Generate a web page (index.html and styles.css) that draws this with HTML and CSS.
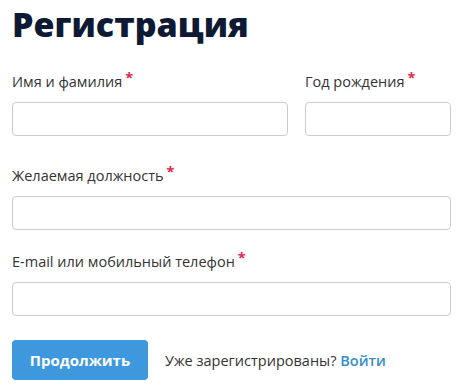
FILE: index.html
```
<!DOCTYPE html>
<html lang="ru">
<head>
  <meta charset="UTF-8">
  <meta name="viewport" content="width=device-width, initial-scale=1.0">
  <title>Регистрация</title>
  <link rel="stylesheet" href="styles.css">
</head>
<body>

<div class="container">
  <h1>Регистрация</h1>

  <form class="reg-form">
    <div class="row row-split">
      <div class="field">
        <label>Имя и фамилия<span class="req">*</span></label>
        <input type="text">
      </div>
      <div class="field">
        <label>Год рождения<span class="req">*</span></label>
        <input type="text">
      </div>
    </div>

    <div class="row">
      <div class="field">
        <label>Желаемая должность<span class="req">*</span></label>
        <input type="text">
      </div>
    </div>

    <div class="row">
      <div class="field">
        <label>E-mail или мобильный телефон<span class="req">*</span></label>
        <input type="text">
      </div>
    </div>

    <div class="actions">
      <button type="button">Продолжить</button>
      <span class="login-hint">Уже зарегистрированы? <a href="#">Войти</a></span>
    </div>
  </form>
</div>

</body>
</html>
```

FILE: styles.css
```
body {
  font-family: "Open Sans", Arial, sans-serif;
  margin: 0;
  padding: 0;
  background-color: #fff;
  color: #333;
}

.container {
  padding: 0 10px 0 12px;
}

h1 {
  margin: 0;
  padding-top: 2px;
  font-size: 34px;
  line-height: 44px;
  font-weight: 800;
  color: #0e1a33;
}

.reg-form {
  margin-top: 26px;
}

.row {
  margin-bottom: 22px;
}

.row-split {
  display: grid;
  grid-template-columns: 1fr 146px;
  gap: 17px;
  margin-bottom: 30px;
}

.field label {
  display: block;
  font-size: 14.5px;
  line-height: 20px;
  margin-bottom: 10px;
}

.req {
  color: #e0294a;
  font-weight: 700;
  margin-left: 3px;
  position: relative;
  top: -4px;
}

.field input {
  display: block;
  width: 100%;
  height: 34px;
  box-sizing: border-box;
  border: 1px solid #ccc;
  border-radius: 4px;
  padding: 6px 10px;
  font-size: 14px;
  font-family: inherit;
}

.actions {
  display: flex;
  align-items: center;
  gap: 17px;
  margin-top: 24px;
}

button {
  height: 40px;
  width: 136px;
  padding: 0;
  background-color: #3d98dd;
  color: #fff;
  border: none;
  border-radius: 4px;
  font-family: inherit;
  font-size: 15px;
  font-weight: 700;
  cursor: pointer;
}

.login-hint {
  font-size: 14.5px;
}

.login-hint a {
  color: #3a8dcc;
  font-weight: 600;
  text-decoration: none;
}
```
